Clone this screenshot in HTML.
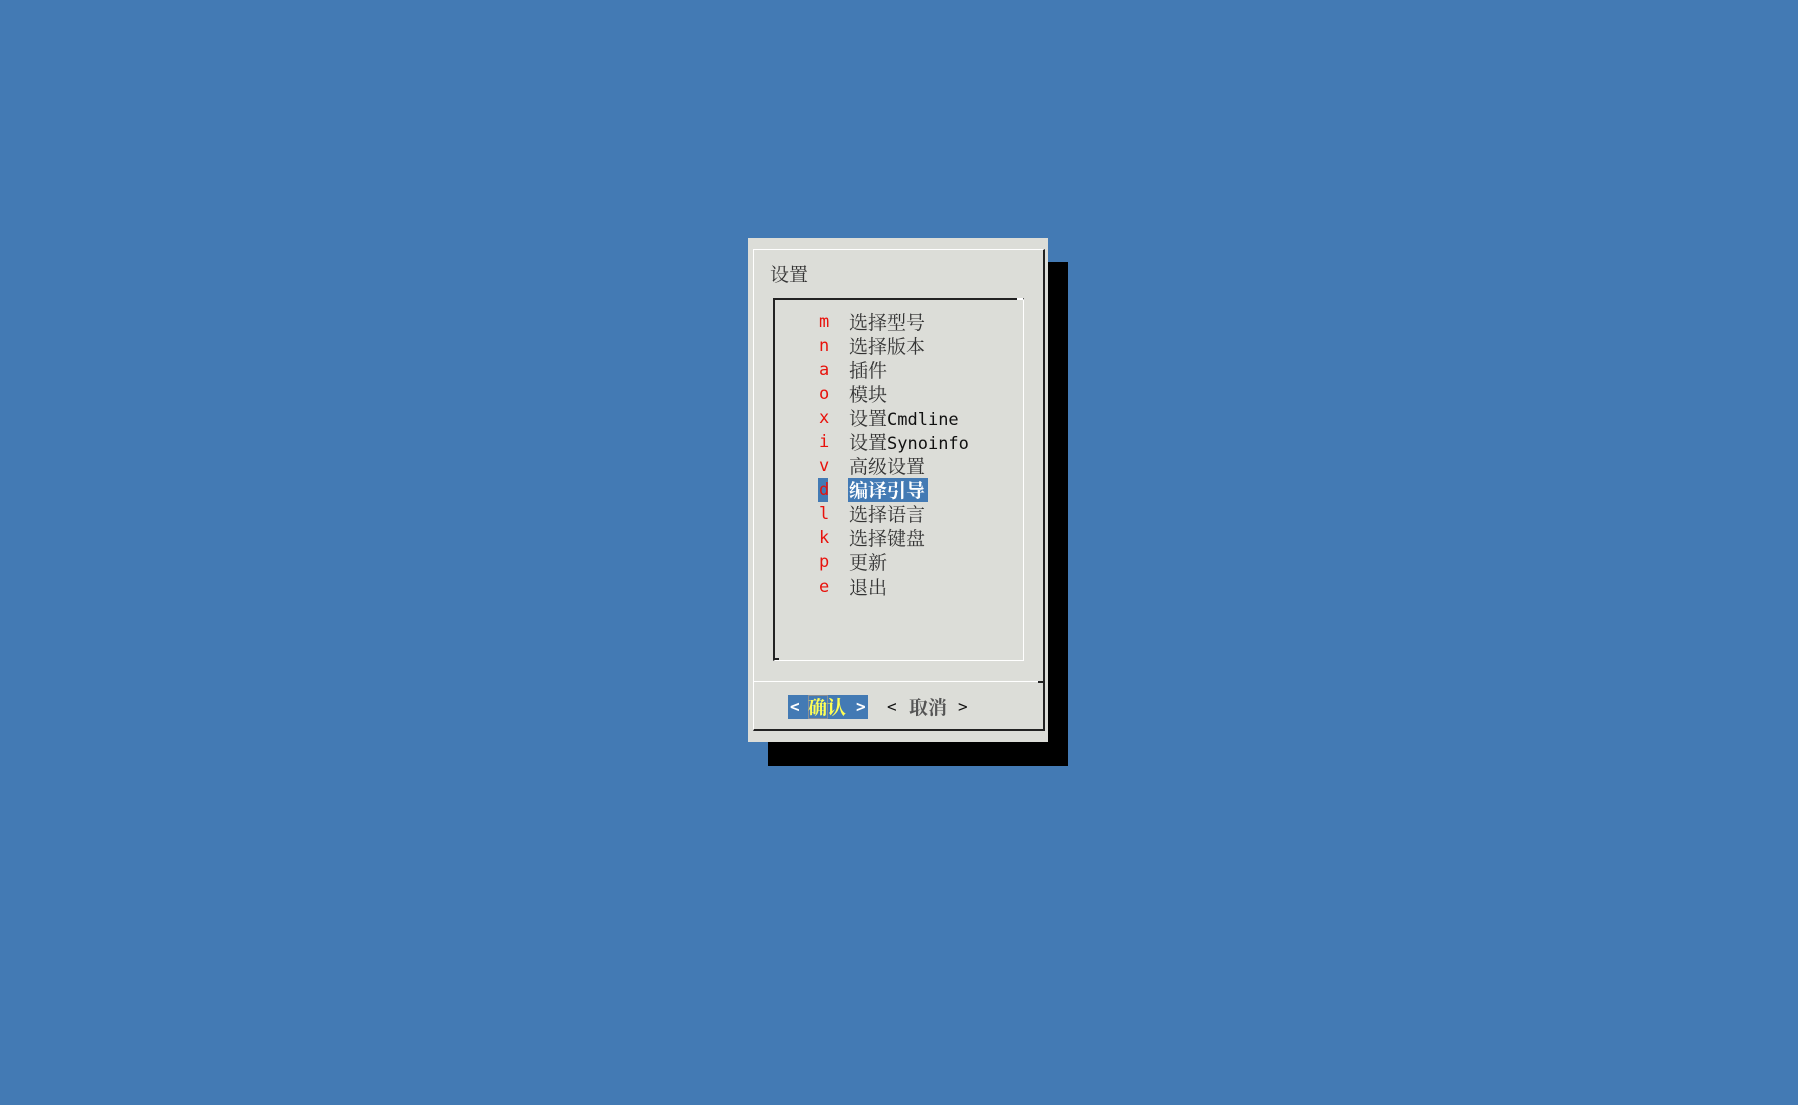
<!DOCTYPE html>
<html><head><meta charset="utf-8"><style>
body{margin:0;width:1798px;height:1105px;background:#437ab4;position:relative;overflow:hidden;font-family:"DejaVu Sans Mono","Noto Sans CJK SC",monospace;}
.a{position:absolute}
.row{position:absolute;height:24px;line-height:24px;font-size:16px;white-space:nowrap}
.k{position:absolute;left:819px;width:10px;text-align:center;color:#e8120c;font-size:17px}
.t{position:absolute;left:849px;color:#111;font-size:17px}
.c{font-family:"Noto Serif CJK SC","Noto Sans CJK SC",serif;font-size:19px;letter-spacing:0px;color:#333}
</style></head><body>
<div class="a" style="left:768px;top:262px;width:300px;height:504px;background:#000"></div>
<div class="a" style="left:748px;top:238px;width:300px;height:504px;background:#dcddd8"></div>
<div class="a" style="left:753px;top:249px;width:289px;height:479px;border-left:1px solid #fff;border-top:1px solid #fff;border-right:2px solid #222;border-bottom:2px solid #222"></div>
<div class="a" style="left:754px;top:681px;width:288px;height:1px;background:#fff"></div>
<div class="a" style="left:1038px;top:681px;width:5px;height:2px;background:#222"></div>
<div class="a c" style="left:770px;top:262px;line-height:24px">设置</div>
<div class="a" style="left:773px;top:298px;width:248px;height:360px;border-left:2px solid #222;border-top:2px solid #222;border-right:1px solid #fff;border-bottom:1px solid #fff"></div>
<div class="a" style="left:1017px;top:298px;width:6px;height:2px;background:#fff"></div>
<div class="a" style="left:773px;top:658px;width:6px;height:2px;background:#222"></div>

<div class="row" style="top:310px"><span class="k">m</span><span class="t c">选择型号</span></div>
<div class="row" style="top:334px"><span class="k">n</span><span class="t c">选择版本</span></div>
<div class="row" style="top:358px"><span class="k">a</span><span class="t c">插件</span></div>
<div class="row" style="top:382px"><span class="k">o</span><span class="t c">模块</span></div>
<div class="row" style="top:406px"><span class="k">x</span><span class="t"><span class="c">设置</span>Cmdline</span></div>
<div class="row" style="top:430px"><span class="k">i</span><span class="t"><span class="c">设置</span>Synoinfo</span></div>
<div class="row" style="top:454px"><span class="k">v</span><span class="t c">高级设置</span></div>
<div class="a" style="left:818px;top:478px;width:10px;height:24px;background:#437ab4"></div>
<div class="a" style="left:848px;top:478px;width:80px;height:24px;background:#437ab4"></div>
<div class="row" style="top:478px"><span class="k">d</span><span class="t c" style="color:#fff;font-weight:bold">编译引导</span></div>
<div class="row" style="top:502px"><span class="k">l</span><span class="t c">选择语言</span></div>
<div class="row" style="top:526px"><span class="k">k</span><span class="t c">选择键盘</span></div>
<div class="row" style="top:550px"><span class="k">p</span><span class="t c">更新</span></div>
<div class="row" style="top:575px"><span class="k">e</span><span class="t c">退出</span></div>

<div class="a" style="left:788px;top:695px;width:80px;height:24px;background:#437ab4"></div>
<div class="a" style="left:808px;top:695px;width:18px;height:22px;border:1px solid #8a8f96"></div>
<div class="row" style="top:695px;left:790px;color:#fff;font-weight:bold">&lt;</div>
<div class="row c" style="top:695px;left:808px;color:#ffff55;font-weight:bold">确认</div>
<div class="row" style="top:695px;left:856px;color:#fff;font-weight:bold">&gt;</div>
<div class="row" style="top:695px;left:887px;color:#111">&lt;</div>
<div class="row c" style="top:695px;left:909px;color:#555;font-weight:bold">取消</div>
<div class="row" style="top:695px;left:958px;color:#111">&gt;</div>
</body></html>
